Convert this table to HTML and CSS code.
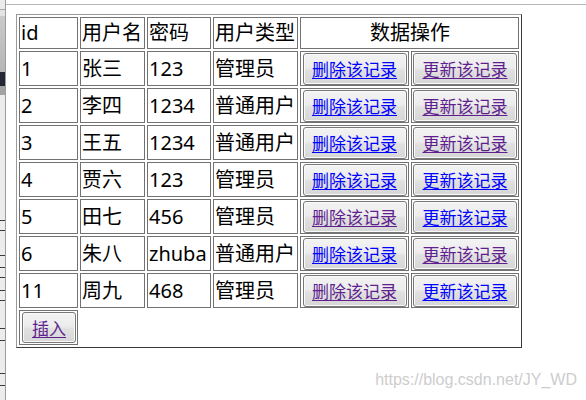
FILE: index.html
```html
<!DOCTYPE html>
<html lang="zh-CN">
<head>
<meta charset="utf-8">
<title>用户列表</title>
<link rel="stylesheet" href="styles.css">
</head>
<body>
<div class="screen">
  <div class="edge"></div>
  <main class="page">
    <div class="topline"></div>
    <div class="grid">
      <div class="cell">id</div>
      <div class="cell">用户名</div>
      <div class="cell">密码</div>
      <div class="cell">用户类型</div>
      <div class="cell op-head">数据操作</div>

      <div class="cell">1</div><div class="cell">张三</div><div class="cell">123</div><div class="cell">管理员</div>
      <div class="cell act"><button class="btn"><span class="link">删除该记录</span></button></div>
      <div class="cell act"><button class="btn"><span class="link visited">更新该记录</span></button></div>

      <div class="cell">2</div><div class="cell">李四</div><div class="cell">1234</div><div class="cell">普通用户</div>
      <div class="cell act"><button class="btn"><span class="link">删除该记录</span></button></div>
      <div class="cell act"><button class="btn"><span class="link visited">更新该记录</span></button></div>

      <div class="cell">3</div><div class="cell">王五</div><div class="cell">1234</div><div class="cell">普通用户</div>
      <div class="cell act"><button class="btn"><span class="link">删除该记录</span></button></div>
      <div class="cell act"><button class="btn"><span class="link visited">更新该记录</span></button></div>

      <div class="cell">4</div><div class="cell">贾六</div><div class="cell">123</div><div class="cell">管理员</div>
      <div class="cell act"><button class="btn"><span class="link">删除该记录</span></button></div>
      <div class="cell act"><button class="btn"><span class="link">更新该记录</span></button></div>

      <div class="cell">5</div><div class="cell">田七</div><div class="cell">456</div><div class="cell">管理员</div>
      <div class="cell act"><button class="btn"><span class="link visited">删除该记录</span></button></div>
      <div class="cell act"><button class="btn"><span class="link">更新该记录</span></button></div>

      <div class="cell">6</div><div class="cell">朱八</div><div class="cell">zhuba</div><div class="cell">普通用户</div>
      <div class="cell act"><button class="btn"><span class="link">删除该记录</span></button></div>
      <div class="cell act"><button class="btn"><span class="link visited">更新该记录</span></button></div>

      <div class="cell">11</div><div class="cell">周九</div><div class="cell">468</div><div class="cell">管理员</div>
      <div class="cell act"><button class="btn"><span class="link visited">删除该记录</span></button></div>
      <div class="cell act"><button class="btn"><span class="link">更新该记录</span></button></div>

      <div class="cell ins"><button class="btn btn-ins"><span class="link visited">插入</span></button></div>
    </div>
  </main>
  <div class="watermark">https://blog.csdn.net/JY_WD</div>
</div>
</body>
</html>
```

FILE: styles.css
```css
html, body {
  margin: 0;
  padding: 0;
  background: #ffffff;
}

.screen {
  position: relative;
  display: flex;
  height: 400px;
  overflow: hidden;
}

.edge {
  flex: none;
  width: 5px;
  border-right: 1px solid #9c9c9c;
  background:
    linear-gradient(to bottom,
      transparent 0 220px, #3a3a3a 220px 221px,
      transparent 221px 230px, #3a3a3a 230px 231px,
      transparent 231px 255px, #3a3a3a 255px 256px,
      transparent 256px 267px, #3a3a3a 267px 268px,
      transparent 268px 277px, #3a3a3a 277px 278px,
      transparent 278px 290px, #3a3a3a 290px 291px,
      transparent 291px 300px, #3a3a3a 300px 301px,
      transparent 301px 328px, #3a3a3a 328px 329px,
      transparent 329px 340px, #3a3a3a 340px 341px,
      transparent 341px 373px, #3a3a3a 373px 374px,
      transparent 374px 385px, #3a3a3a 385px 386px,
      transparent 386px),
    linear-gradient(to bottom,
      #ececec 0 9px, #a9a9a9 9px 10px, #e4e4e4 10px 16px,
      #cacaca 16px, #b6b6b6 72px,
      #232834 72px 86px, #a3a3a3 86px 95px,
      #ececec 95px 100%);
}

.page {
  flex: 1;
  padding-top: 4px;
}

.topline {
  height: 1px;
  background: #b7b7b7;
}

.grid {
  display: grid;
  width: max-content;
  margin: 9px 0 0 10px;
  grid-template-columns: 59px 65px 64px 85px 109px 108px;
  grid-template-rows: 32px repeat(8, 35px);
  gap: 2px;
  padding: 2px;
  border: 1px solid;
  border-color: #9a9a9a #3a3a3a #3a3a3a #9a9a9a;
}

.cell {
  box-sizing: border-box;
  display: flex;
  align-items: center;
  padding-left: 1px;
  border: 1px solid #727272;
  font: 20px/1 "Noto Sans", "Noto Sans CJK SC", sans-serif;
  color: #000;
  white-space: nowrap;
  overflow: hidden;
}

.op-head {
  grid-column: span 2;
  justify-content: center;
}

.act {
  padding: 0;
  justify-content: center;
}

.btn {
  box-sizing: border-box;
  display: flex;
  align-items: center;
  justify-content: center;
  width: 104px;
  height: 32px;
  margin: 0;
  padding: 0 0 1px;
  border: 1px solid #777777;
  border-radius: 3px;
  background: linear-gradient(to bottom, #f3f3f3 0%, #ececec 45%, #e0e0e0 55%, #d6d6d6 100%);
  box-shadow: inset 0 0 0 1px #fafafa;
  font: 17px/1 "Noto Sans CJK SC", sans-serif;
}

.ins {
  padding-left: 1px;
}

.btn-ins {
  width: 54px;
  height: 31px;
  margin-left: 1px;
}

.link {
  color: #0000ff;
  text-decoration: underline;
  text-underline-offset: 2px;
}

.link.visited {
  color: #5f1f8f;
}

.watermark {
  position: absolute;
  right: 9px;
  top: 372px;
  font: 16px/1 "Liberation Sans", Arial, sans-serif;
  color: #cdcdcd;
  white-space: nowrap;
}
```
